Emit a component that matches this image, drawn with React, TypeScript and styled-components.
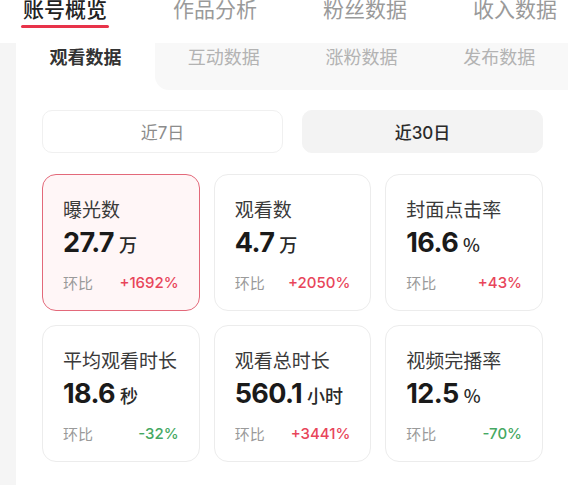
import React from 'react';
import styled, { createGlobalStyle } from 'styled-components';

const GlobalStyle = createGlobalStyle`
  html, body {
    margin: 0;
    padding: 0;
    background: #ffffff;
    font-family: Inter, "Noto Sans CJK SC", sans-serif;
    -webkit-font-smoothing: antialiased;
  }
  * {
    box-sizing: border-box;
  }
`;

const Page = styled.div`
  width: 568px;
  height: 485px;
  overflow: hidden;
  display: flex;
  flex-direction: column;
`;

const Header = styled.div`
  height: 43px;
  flex-shrink: 0;
  display: flex;
  align-items: flex-start;
  gap: 66px;
  padding-left: 23px;
  background: #ffffff;
  overflow: hidden;
`;

const HeaderTab = styled.div`
  display: flex;
  flex-direction: column;
  align-items: stretch;
  margin-top: -5px;
  flex-shrink: 0;
`;

const HeaderLabel = styled.span<{ active?: boolean }>`
  font-family: "Noto Sans CJK SC", sans-serif;
  font-size: 21px;
  line-height: 26px;
  font-weight: ${({ active }) => (active ? 500 : 400)};
  color: ${({ active }) => (active ? '#222222' : '#9a9a9a')};
  white-space: nowrap;
`;

const Underline = styled.div`
  height: 3px;
  margin: 4px -2px 0;
  border-radius: 2px;
  background: #e8334a;
`;

const Body = styled.div`
  flex: 1;
  display: flex;
  padding-left: 16px;
  background: #f5f5f5;
`;

const Panel = styled.div`
  flex: 1;
  background: #ffffff;
  display: flex;
  flex-direction: column;
`;

const SubTabs = styled.div`
  height: 47px;
  display: flex;
`;

const SubTab = styled.div<{ active?: boolean }>`
  flex: ${({ active }) => (active ? '0 0 139px' : '1')};
  padding-top: 1px;
  text-align: center;
  font-family: "Noto Sans CJK SC", sans-serif;
  font-size: 18px;
  line-height: 24px;
  font-weight: ${({ active }) => (active ? 700 : 400)};
  color: ${({ active }) => (active ? '#333333' : '#b3b3b3')};
  white-space: nowrap;
`;

const SubTabRest = styled.div`
  flex: 1;
  display: flex;
  background: #f8f8f8;
  border-bottom-left-radius: 14px;
`;

const Content = styled.div`
  padding: 20px 25px 0 26px;
`;

const DateRow = styled.div`
  display: grid;
  grid-template-columns: 1fr 1fr;
  gap: 19px;
`;

const DateButton = styled.button<{ active?: boolean }>`
  height: 43px;
  border-radius: 10px;
  border: 1px solid ${({ active }) => (active ? '#f3f3f3' : '#f0f0f0')};
  background: ${({ active }) => (active ? '#f3f3f3' : '#ffffff')};
  color: ${({ active }) => (active ? '#2a2a2a' : '#8c8c8c')};
  font-family: Inter, "Noto Sans CJK SC", sans-serif;
  font-size: 17px;
  font-weight: ${({ active }) => (active ? 500 : 400)};
  padding: 0;
  cursor: pointer;
`;

const MetricGrid = styled.div`
  margin-top: 21px;
  display: grid;
  grid-template-columns: repeat(3, 1fr);
  gap: 14px;
`;

const MetricCard = styled.div<{ selected?: boolean }>`
  height: 137px;
  padding: 22px 20px 0 20px;
  border-radius: 14px;
  border: ${({ selected }) => (selected ? '1.5px solid #e3697a' : '1px solid #ececec')};
  background: ${({ selected }) => (selected ? '#fff6f7' : '#ffffff')};
  display: flex;
  flex-direction: column;
`;

const MetricTitle = styled.div`
  font-family: "Noto Sans CJK SC", sans-serif;
  font-size: 19px;
  line-height: 24px;
  color: #3a3a3a;
  white-space: nowrap;
`;

const MetricValue = styled.div`
  margin-top: 5px;
  display: flex;
  align-items: baseline;
  height: 34px;
  line-height: 34px;
  color: #1a1a1a;
`;

const Number = styled.span`
  font-size: 27px;
  font-weight: 700;
  letter-spacing: -0.6px;
`;

const Unit = styled.span`
  margin-left: 5px;
  font-family: "Noto Sans CJK SC", sans-serif;
  font-size: 18px;
  font-weight: 500;
  color: #2a2a2a;
`;

const Compare = styled.div`
  margin-top: 13px;
  display: flex;
  justify-content: space-between;
  align-items: center;
  line-height: 20px;
`;

const CompareLabel = styled.span`
  font-family: "Noto Sans CJK SC", sans-serif;
  font-size: 15px;
  color: #9a9a9a;
`;

const Change = styled.span<{ up: boolean }>`
  font-size: 15px;
  font-weight: 500;
  color: ${({ up }) => (up ? '#e8455a' : '#45a862')};
`;

type Metric = {
  title: string;
  value: string;
  unit: string;
  change: string;
};

const metrics: Metric[] = [
  { title: '曝光数', value: '27.7', unit: '万', change: '+1692%' },
  { title: '观看数', value: '4.7', unit: '万', change: '+2050%' },
  { title: '封面点击率', value: '16.6', unit: '%', change: '+43%' },
  { title: '平均观看时长', value: '18.6', unit: '秒', change: '-32%' },
  { title: '观看总时长', value: '560.1', unit: '小时', change: '+3441%' },
  { title: '视频完播率', value: '12.5', unit: '%', change: '-70%' },
];

const headerTabs = ['账号概览', '作品分析', '粉丝数据', '收入数据'];
const subTabs = ['互动数据', '涨粉数据', '发布数据'];

export default function App() {
  return (
    <Page>
      <GlobalStyle />
      <Header>
        {headerTabs.map((tab, i) => (
          <HeaderTab key={tab}>
            <HeaderLabel active={i === 0}>{tab}</HeaderLabel>
            {i === 0 && <Underline />}
          </HeaderTab>
        ))}
      </Header>
      <Body>
        <Panel>
          <SubTabs>
            <SubTab active>观看数据</SubTab>
            <SubTabRest>
              {subTabs.map((tab) => (
                <SubTab key={tab}>{tab}</SubTab>
              ))}
            </SubTabRest>
          </SubTabs>
          <Content>
            <DateRow>
              <DateButton>近7日</DateButton>
              <DateButton active>近30日</DateButton>
            </DateRow>
            <MetricGrid>
              {metrics.map((m, i) => (
                <MetricCard key={m.title} selected={i === 0}>
                  <MetricTitle>{m.title}</MetricTitle>
                  <MetricValue>
                    <Number>{m.value}</Number>
                    <Unit>{m.unit}</Unit>
                  </MetricValue>
                  <Compare>
                    <CompareLabel>环比</CompareLabel>
                    <Change up={m.change.startsWith('+')}>{m.change}</Change>
                  </Compare>
                </MetricCard>
              ))}
            </MetricGrid>
          </Content>
        </Panel>
      </Body>
    </Page>
  );
}
